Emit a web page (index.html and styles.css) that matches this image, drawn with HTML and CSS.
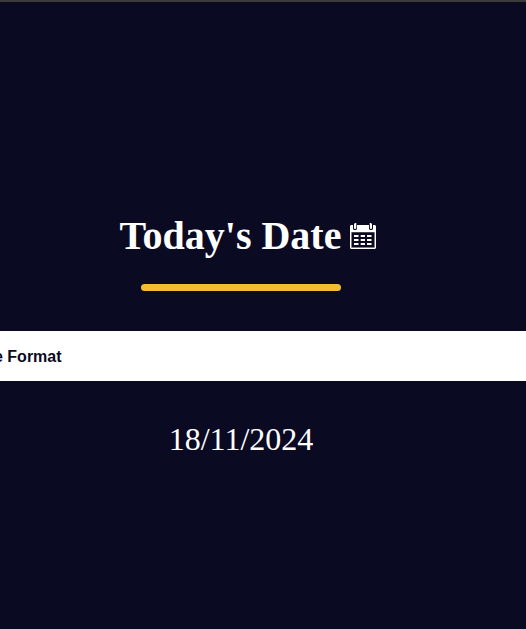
FILE: index.html
```html
<!DOCTYPE html>
<html lang="en">
<head>
<meta charset="utf-8">
<meta name="viewport" content="width=device-width, initial-scale=1">
<title>Today's Date</title>
<link rel="stylesheet" href="styles.css">
</head>
<body>
<main class="page">
  <h1 class="title">Today's Date
    <svg class="calendar" viewBox="0 0 26 26" aria-hidden="true">
      <path class="frame" d="M1 2H25L26 3V25L25 26H1L0 25V3Z"/>
      <path class="edge" d="M1 9H25V25H1Z"/>
      <path class="well" d="M1.6 9.3H24.4V24.4H1.6Z"/>
      <path class="well" d="M3 1H7V6L6 7H4L3 6ZM19 1H23V6L22 7H20L19 6Z"/>
      <path class="frame" d="M4 1L5 0H6.3V5L5.6 6H4.4L4 5ZM19.7 0H21L22 1V5L21.6 6H20.4L20 5Z"/>
      <path class="frame" d="M4 12H8.5V14H4ZM10.7 12H15V14H10.7ZM17 12H21.5V14H17ZM4 16H8.5V18H4ZM10.7 16H15V18H10.7ZM17 16H21.5V18H17ZM4 20H8.5V22H4ZM10.7 20H15V22H10.7ZM17 20H21.5V22H17Z"/>
    </svg>
  </h1>
  <div class="rule"></div>
  <select class="format" aria-label="Date format">
    <option>e Format</option>
  </select>
  <p class="date">18/11/2024</p>
</main>
</body>
</html>
```
FILE: styles.css
```css
* {
  box-sizing: border-box;
}

body {
  margin: 0;
  min-height: 100vh;
  display: flex;
  border-top: 2px solid #3c3c3c;
  background: #0a0a23;
  color: #ffffff;
  font-family: "Liberation Serif", "Times New Roman", serif;
  overflow-x: hidden;
}

.page {
  flex: 1;
  display: flex;
  flex-direction: column;
  align-items: center;
  justify-content: center;
  padding: 38px 44px 0 0;
}

.title {
  display: flex;
  align-items: center;
  gap: 9px;
  margin: 0 0 24px 14px;
  font-size: 40px;
  line-height: 48px;
  white-space: nowrap;
}

.calendar {
  width: 26px;
  height: 26px;
}

.frame {
  fill: #ffffff;
}

.edge {
  fill: #c8c8d4;
}

.well {
  fill: #0a0a23;
}

.rule {
  width: 200px;
  height: 7px;
  margin-bottom: 40px;
  border-radius: 4px;
  background: #f1be32;
}

.format {
  appearance: none;
  align-self: stretch;
  height: 50px;
  margin: 0 -44px 40px -6px;
  padding: 0;
  border: 0;
  border-radius: 0;
  background: #ffffff;
  color: #0a0a23;
  font: bold 16px "Liberation Sans", Arial, sans-serif;
}

.date {
  margin: 0;
  font-size: 32px;
  line-height: 36px;
}
```
